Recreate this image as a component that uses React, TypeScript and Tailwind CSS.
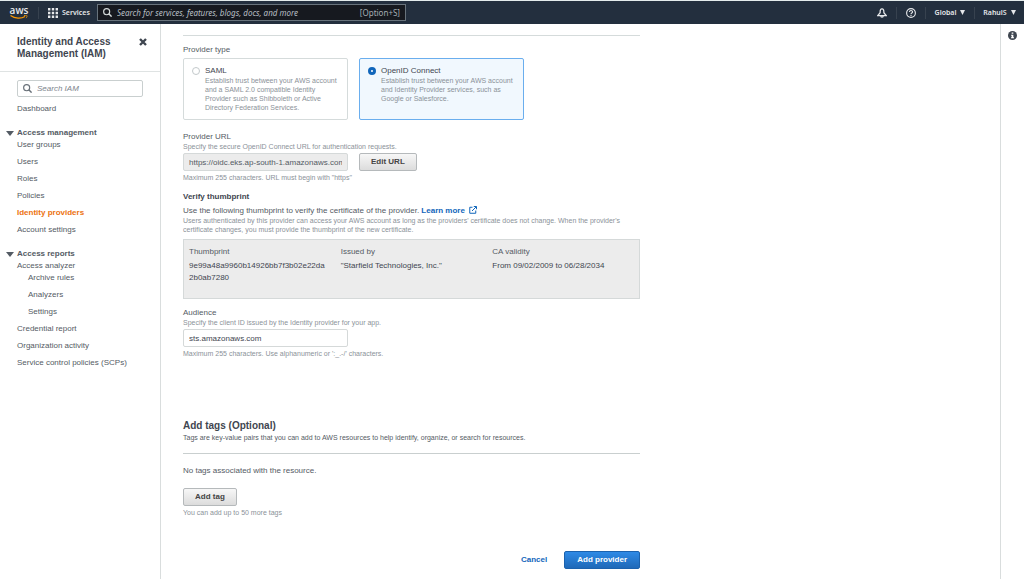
import { useState } from "react";
import type { ReactNode } from "react";
import clsx from "clsx";

type NavItem = { label: string; active?: boolean };

const managementLinks: NavItem[] = [
  { label: "User groups" },
  { label: "Users" },
  { label: "Roles" },
  { label: "Policies" },
  { label: "Identity providers", active: true },
  { label: "Account settings" },
];

const analyzerLinks: NavItem[] = [
  { label: "Archive rules" },
  { label: "Analyzers" },
  { label: "Settings" },
];

const reportLinks: NavItem[] = [
  { label: "Credential report" },
  { label: "Organization activity" },
  { label: "Service control policies (SCPs)" },
];

const providerTypes = [
  {
    id: "saml",
    title: "SAML",
    description:
      "Establish trust between your AWS account and a SAML 2.0 compatible Identity Provider such as Shibboleth or Active Directory Federation Services.",
  },
  {
    id: "oidc",
    title: "OpenID Connect",
    description:
      "Establish trust between your AWS account and Identity Provider services, such as Google or Salesforce.",
  },
];

const certificate = [
  { label: "Thumbprint", value: "9e99a48a9960b14926bb7f3b02e22da2b0ab7280" },
  { label: "Issued by", value: "\"Starfield Technologies, Inc.\"" },
  { label: "CA validity", value: "From 09/02/2009 to 06/28/2034" },
];

const SearchIcon = ({ className }: { className?: string }) => (
  <svg viewBox="0 0 16 16" className={className} fill="none" stroke="currentColor" strokeWidth="2">
    <circle cx="6.5" cy="6.5" r="5.4" />
    <path d="M10.300 10.300l5 5" strokeWidth="2.600" />
  </svg>
);

const Caret = ({ className }: { className?: string }) => (
  <svg viewBox="0 0 10 8" preserveAspectRatio="none" className={className} fill="currentColor">
    <path d="M0 0h10L5 8z" />
  </svg>
);

const AwsLogo = () => (
  <a href="#" className="flex w-[18px] flex-col items-center text-[#e6e8ea]" aria-label="AWS home">
    <span className="font-['Open_Sans',sans-serif] text-[10px] font-semibold leading-[9px]">aws</span>
    <svg viewBox="0 0 36 8" className="h-1 w-[18px]" fill="none" stroke="#ff9900">
      <path d="M1 1c9 6.500 21 7 29 2" strokeWidth="2.400" />
      <path d="M28 1.200c3-.9 5.500-.7 6 0s0 3-2 5" strokeWidth="1.600" />
    </svg>
  </a>
);

const TopBar = () => (
  <header className="flex h-6 items-center border-t border-[#e4ecec] bg-[#232f3e] font-['Noto_Sans','Open_Sans',sans-serif] text-[7px] text-[#e6e8ea]">
    <div className="flex w-[38px] justify-center">
      <AwsLogo />
    </div>
    <button className="flex h-3 w-[59px] items-center gap-1 border-l border-[#37424f] pl-[9px] font-semibold leading-none">
      <svg viewBox="0 0 10 10" className="size-[10px] shrink-0" fill="currentColor">
        <path d="M0 0h2.400v2.400H0zM3.800 0h2.400v2.400H3.800zM7.600 0H10v2.400H7.600zM0 3.800h2.400v2.400H0zM3.800 3.800h2.400v2.400H3.800zM7.600 3.800H10v2.400H7.600zM0 7.600h2.400V10H0zM3.800 7.600h2.400V10H3.800zM7.600 7.600H10V10H7.600z" />
      </svg>
      Services
    </button>
    <label className="flex h-[17px] w-[309px] items-center border border-[#68737c] bg-[#16191f] px-[5px] text-[8px]">
      <SearchIcon className="mr-[5px] size-[9px] shrink-0 text-[#d5dbdb]" />
      <input
        type="text"
        aria-label="Search"
        placeholder="Search for services, features, blogs, docs, and more"
        className="min-w-0 flex-1 bg-transparent italic outline-none placeholder:text-[#b8bfc4]"
      />
      <span className="text-[#a5adb3]">[Option+S]</span>
    </label>
    <div className="ml-auto flex items-center font-semibold">
      <button className="flex h-3 w-7 items-center justify-center" aria-label="Notifications">
        <svg viewBox="0 0 16 16" className="size-[10px]" fill="none" stroke="currentColor" strokeWidth="2">
          <path d="M8 1.200C5.700 1.600 5 3.500 5 5.800v1.700L1.300 12h13.400L11 7.500V5.800c0-2.300-.7-4.200-3-4.600z" />
          <path d="M6 12.500c0 3 4 3 4 0" />
        </svg>
      </button>
      <button className="flex h-3 w-[29px] items-center justify-center border-l border-[#37424f]" aria-label="Help">
        <svg viewBox="0 0 16 16" className="size-[10px]" fill="none" stroke="currentColor" strokeWidth="1.800">
          <circle cx="8" cy="8" r="7" />
          <path d="M5.600 6.400c0-3.200 4.900-3 4.900-.2C10.500 8 8 8 8 9.800" />
          <path d="M8 11.200v1.600" />
        </svg>
      </button>
      <button className="flex h-3 w-[49px] items-center justify-center gap-1 border-l border-[#37424f]">
        Global
        <Caret className="h-[5px] w-[5px]" />
      </button>
      <button className="flex h-3 w-[50px] items-center justify-center gap-1 border-l border-[#37424f]">
        RahulS
        <Caret className="h-[5px] w-[5px]" />
      </button>
    </div>
  </header>
);

const NavLinks = ({ items, className }: { items: NavItem[]; className?: string }) => (
  <ul className={clsx("flex flex-col gap-[7px]", className)}>
    {items.map((item) => (
      <li key={item.label}>
        <a href="#" className={item.active ? "font-bold text-[#ec7211]" : ""}>
          {item.label}
        </a>
      </li>
    ))}
  </ul>
);

const NavHeading = ({ children }: { children: ReactNode }) => (
  <button className="-ml-[11px] flex items-center gap-[3px] font-bold">
    <Caret className="h-[5px] w-2" />
    {children}
  </button>
);

const Sidebar = () => (
  <aside className="w-[161px] shrink-0 border-r border-[#d9dddd] text-[#545b64]">
    <div className="flex items-start justify-between border-b border-[#dfe3e3] pt-3 pr-[13px] pb-[11px] pl-[17px]">
      <h1 className="text-[10px] font-bold leading-3 text-[#3f4650]">
        Identity and Access
        <br />
        Management (IAM)
      </h1>
      <button aria-label="Close navigation" className="pt-[2px]">
        <svg viewBox="0 0 8 8" className="size-2 text-[#3f4650]" stroke="currentColor" strokeWidth="2.400">
          <path d="M1 1l6 6M7 1L1 7" />
        </svg>
      </button>
    </div>
    <nav className="pt-2 pr-[17px] pl-[17px]">
      <label className="flex h-[17px] items-center rounded-xs border border-[#c9cfcf] px-[5px]">
        <SearchIcon className="mr-[5px] size-[9px] shrink-0 text-[#687078]" />
        <input
          type="text"
          aria-label="Search IAM"
          placeholder="Search IAM"
          className="min-w-0 flex-1 italic outline-none placeholder:text-[#7d858c]"
        />
      </label>
      <a href="#" className="mt-[7px] block">
        Dashboard
      </a>
      <div className="mt-[14px]">
        <NavHeading>Access management</NavHeading>
        <NavLinks items={managementLinks} className="mt-[2px]" />
      </div>
      <div className="mt-[14px]">
        <NavHeading>Access reports</NavHeading>
        <a href="#" className="mt-[2px] block">
          Access analyzer
        </a>
        <NavLinks items={analyzerLinks} className="mt-[2px] pl-[11px]" />
        <NavLinks items={reportLinks} className="mt-[7px] whitespace-nowrap" />
      </div>
    </nav>
  </aside>
);

const Hint = ({ children, className }: { children: ReactNode; className?: string }) => (
  <p className={clsx("text-[7px] leading-[9px] text-[#8b9299]", className)}>{children}</p>
);

const GrayButton = ({ children }: { children: ReactNode }) => (
  <button
    type="button"
    className="h-[18px] rounded-xs border border-[#b5b9bb] bg-linear-to-b from-[#f7f7f7] to-[#dcdcdc] px-[11px] font-bold text-[#444444]"
  >
    {children}
  </button>
);

const ProviderForm = () => {
  const [providerType, setProviderType] = useState("oidc");
  const [audience, setAudience] = useState("sts.amazonaws.com");

  return (
    <form className="w-full max-w-[457px]" onSubmit={(e) => e.preventDefault()}>
      <div role="radiogroup" aria-labelledby="provider-type" className="border-t border-[#d5dbdb] pt-[9px]">
        <p id="provider-type">Provider type</p>
        <div className="mt-[3px] flex gap-[11px]">
          {providerTypes.map((type) => {
            const selected = type.id === providerType;
            return (
              <label
                key={type.id}
                className={clsx(
                  "flex h-[62px] w-[165px] items-start gap-[5px] rounded-xs border px-2 py-[7px]",
                  selected ? "border-[#6aaeee] bg-[#f1f8fe]" : "border-[#d5dbdb]"
                )}
              >
                <input
                  type="radio"
                  name="providerType"
                  checked={selected}
                  onChange={() => setProviderType(type.id)}
                  className="mt-px size-2 shrink-0 appearance-none rounded-full border border-[#c3c9cb] bg-white checked:border-[3px] checked:border-[#1166bb]"
                />
                <span>
                  <span className="block text-[#3f4650]">{type.title}</span>
                  <span className="block text-[7px] leading-[9px] text-[#8b9299]">{type.description}</span>
                </span>
              </label>
            );
          })}
        </div>
      </div>

      <label htmlFor="provider-url" className="mt-3 block">
        Provider URL
      </label>
      <Hint>Specify the secure OpenID Connect URL for authentication requests.</Hint>
      <div className="mt-[2px] flex gap-[11px]">
        <input
          id="provider-url"
          type="text"
          readOnly
          value="https://oidc.eks.ap-south-1.amazonaws.com"
          className="h-[18px] w-[165px] rounded-xs border border-[#d5d9d9] bg-[#ececec] px-[5px] outline-none"
        />
        <GrayButton>Edit URL</GrayButton>
      </div>
      <Hint className="mt-[2px]">Maximum 255 characters. URL must begin with "https"</Hint>

      <h2 className="mt-[10px] font-bold text-[#3f4650]">Verify thumbprint</h2>
      <p className="mt-1">
        Use the following thumbprint to verify the certificate of the provider.{" "}
        <a href="#" className="font-bold text-[#1166bb]">
          Learn more
          <svg
            viewBox="0 0 16 16"
            className="ml-1 inline size-2 align-[-1px]"
            fill="none"
            stroke="currentColor"
            strokeWidth="2"
          >
            <path d="M7 2.500H1.500v12h12V9" />
            <path d="M9.500 1H15v5.500M14.500 1.500L6 10" />
          </svg>
        </a>
      </p>
      <Hint>
        Users authenticated by this provider can access your AWS account as long as the providers' certificate does not
        change. When the provider's certificate changes, you must provide the thumbprint of the new certificate.
      </Hint>
      <dl className="mt-[5px] grid grid-cols-3 border border-[#d5d9d9] bg-[#ececec] pt-[7px] pb-[14px]">
        {certificate.map((field) => (
          <div key={field.label} className="pr-2 pl-[5px]">
            <dt>{field.label}</dt>
            <dd className="mt-[3px] break-all leading-3 text-[#3f4650]">{field.value}</dd>
          </div>
        ))}
      </dl>

      <label htmlFor="audience" className="mt-[9px] block">
        Audience
      </label>
      <Hint>Specify the client ID issued by the Identity provider for your app.</Hint>
      <input
        id="audience"
        type="text"
        value={audience}
        onChange={(e) => setAudience(e.target.value)}
        className="mt-[2px] block h-[18px] w-[165px] rounded-xs border border-[#d5d9d9] px-[5px] text-[#3f4650] outline-none"
      />
      <Hint className="mt-[2px]">Maximum 255 characters. Use alphanumeric or ':_.-/' characters.</Hint>

      <h2 className="mt-[62px] text-[10px] font-bold leading-3 text-[#3f4650]">Add tags (Optional)</h2>
      <p className="mt-px border-b border-[#c9cfcf] pb-[11px] text-[7px] leading-[9px]">
        Tags are key-value pairs that you can add to AWS resources to help identify, organize, or search for resources.
      </p>
      <p className="my-3">No tags associated with the resource.</p>
      <GrayButton>Add tag</GrayButton>
      <Hint className="mt-[2px]">You can add up to 50 more tags</Hint>

      <div className="mt-[34px] flex items-center justify-end gap-[17px] pb-[10px]">
        <button type="button" className="font-bold text-[#1166bb]">
          Cancel
        </button>
        <button
          type="submit"
          className="h-[18px] rounded-xs border border-[#1b62ae] bg-linear-to-b from-[#2e8ae6] to-[#1f69b8] px-3 font-bold text-white"
        >
          Add provider
        </button>
      </div>
    </form>
  );
};

export default function App() {
  return (
    <div className="flex min-h-screen flex-col bg-white font-['Liberation_Sans',Arial,sans-serif] text-[8px] leading-[10px] text-[#545b64]">
      <TopBar />
      <div className="flex flex-1">
        <Sidebar />
        <main className="flex-1 px-[22px] pt-[11px]">
          <ProviderForm />
        </main>
        <div className="flex w-6 shrink-0 justify-center border-l border-[#d9dddd] pt-[7px]">
          <button aria-label="Info" className="size-[9px]">
            <svg viewBox="0 0 16 16" className="size-[9px] text-[#3f4650]">
              <circle cx="8" cy="8" r="8" fill="currentColor" />
              <path d="M6.500 2.500h3v2.300h-3zM5.500 6.500h4V11h1.200v2H5.300v-2h1.200V8.400h-1z" fill="#ffffff" />
            </svg>
          </button>
        </div>
      </div>
    </div>
  );
}
